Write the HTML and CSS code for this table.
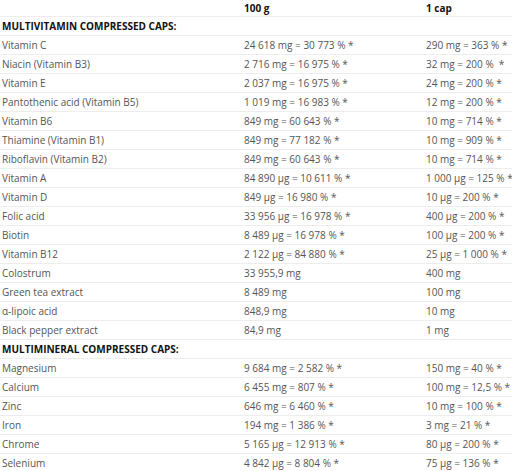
FILE: index.html
```html
<!DOCTYPE html>
<html>
<head>
<meta charset="utf-8">
<link rel="stylesheet" href="styles.css">
</head>
<body>
<table class="facts">
<colgroup><col class="c-name"><col class="c-100"><col class="c-cap"></colgroup>
<thead>
<tr class="head"><th></th><th>100 g</th><th>1 cap</th></tr>
</thead>
<tbody>
<tr class="section"><td>MULTIVITAMIN COMPRESSED CAPS:</td><td></td><td></td></tr>
<tr><td>Vitamin C</td><td>24 618 mg = 30 773 % *</td><td>290 mg = 363 % *</td></tr>
<tr><td>Niacin (Vitamin B3)</td><td>2 716 mg = 16 975 % *</td><td>32 mg = 200 %&nbsp; *</td></tr>
<tr><td>Vitamin E</td><td>2 037 mg = 16 975 % *</td><td>24 mg = 200 % *</td></tr>
<tr><td>Pantothenic acid (Vitamin B5)</td><td>1 019 mg = 16 983 % *</td><td>12 mg = 200 % *</td></tr>
<tr><td>Vitamin B6</td><td>849 mg = 60 643 % *</td><td>10 mg = 714 % *</td></tr>
<tr><td>Thiamine (Vitamin B1)</td><td>849 mg = 77 182 % *</td><td>10 mg = 909 % *</td></tr>
<tr><td>Riboflavin (Vitamin B2)</td><td>849 mg = 60 643 % *</td><td>10 mg = 714 % *</td></tr>
<tr><td>Vitamin A</td><td>84 890 µg = 10 611 % *</td><td>1 000 µg = 125 % *</td></tr>
<tr><td>Vitamin D</td><td>849 µg = 16 980 % *</td><td>10 µg = 200 % *</td></tr>
<tr><td>Folic acid</td><td>33 956 µg = 16 978 % *</td><td>400 µg = 200 % *</td></tr>
<tr><td>Biotin</td><td>8 489 µg = 16 978 % *</td><td>100 µg = 200 % *</td></tr>
<tr><td>Vitamin B12</td><td>2 122 µg = 84 880 % *</td><td>25 µg = 1 000 % *</td></tr>
<tr><td>Colostrum</td><td>33 955,9 mg</td><td>400 mg</td></tr>
<tr><td>Green tea extract</td><td>8 489 mg</td><td>100 mg</td></tr>
<tr><td>α-lipoic acid</td><td>848,9 mg</td><td>10 mg</td></tr>
<tr><td>Black pepper extract</td><td>84,9 mg</td><td>1 mg</td></tr>
<tr class="section"><td>MULTIMINERAL COMPRESSED CAPS:</td><td></td><td></td></tr>
<tr><td>Magnesium</td><td>9 684 mg = 2 582 % *</td><td>150 mg = 40 % *</td></tr>
<tr><td>Calcium</td><td>6 455 mg = 807 % *</td><td>100 mg = 12,5 % *</td></tr>
<tr><td>Zinc</td><td>646 mg = 6 460 % *</td><td>10 mg = 100 % *</td></tr>
<tr><td>Iron</td><td>194 mg = 1 386 % *</td><td>3 mg = 21 % *</td></tr>
<tr><td>Chrome</td><td>5 165 µg = 12 913 % *</td><td>80 µg = 200 % *</td></tr>
<tr><td>Selenium</td><td>4 842 µg = 8 804 % *</td><td>75 µg = 136 % *</td></tr>
</tbody>
</table>
</body>
</html>
```
FILE: styles.css
```css
html, body {
  margin: 0;
  padding: 0;
  background: #ffffff;
}
body {
  font-family: "Open Sans", "Noto Sans", sans-serif;
  font-size: 10px;
  color: #555555;
}
.facts {
  width: 512px;
  border-collapse: collapse;
  table-layout: fixed;
}
.c-name { width: 242px; }
.c-100 { width: 182px; }
.c-cap { width: 88px; }
.facts th,
.facts td {
  padding: 0 0 0 2px;
  height: 18px;
  text-align: left;
  vertical-align: middle;
  white-space: nowrap;
  border-bottom: 1px solid #ededed;
}
.facts .head th {
  height: 16px;
  font-weight: bold;
  color: #111111;
}
.facts .section td {
  font-weight: bold;
  color: #111111;
}
```
